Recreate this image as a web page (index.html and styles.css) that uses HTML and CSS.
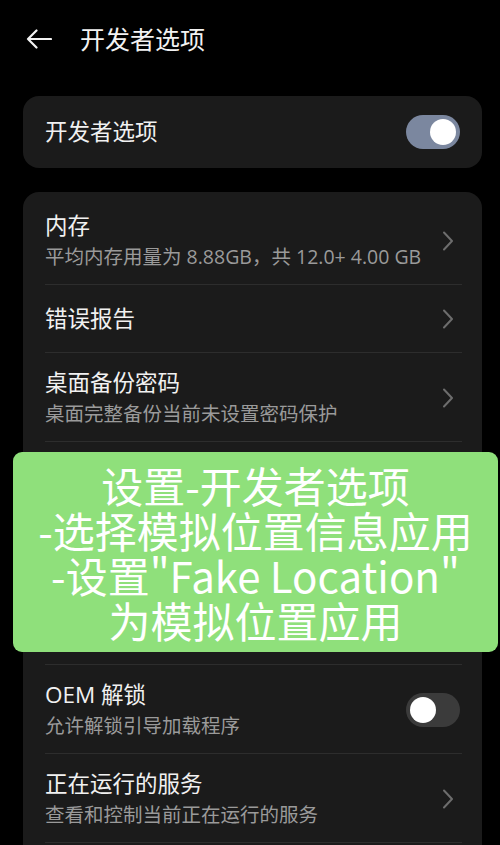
FILE: index.html
```html
<!DOCTYPE html>
<html lang="zh-CN">
<head>
<meta charset="utf-8">
<title>开发者选项</title>
<link rel="stylesheet" href="styles.css">
</head>
<body>
<div class="screen">
  <header class="topbar">
    <svg class="back" width="26" height="20" viewBox="0 0 26 20">
      <path d="M25 10H2M10.5 1.5L2 10l8.5 8.5" fill="none" stroke="#f2f2f2" stroke-width="2.2" stroke-linecap="round" stroke-linejoin="round"/>
    </svg>
    <h1 class="title">开发者选项</h1>
  </header>

  <section class="card card-single">
    <span class="item-title">开发者选项</span>
    <span class="switch switch-on"><span class="knob"></span></span>
  </section>

  <section class="card card-list">
    <div class="item">
      <div class="item-text">
        <div class="item-title">内存</div>
        <div class="item-sub">平均内存用量为 8.88GB，共 12.0+ 4.00 GB</div>
      </div>
      <svg class="chev" width="14" height="22" viewBox="0 0 14 22"><path d="M3 2.5l8 8.5-8 8.5" fill="none" stroke="#6d6d6d" stroke-width="2" stroke-linecap="round" stroke-linejoin="round"/></svg>
    </div>
    <div class="item item-one">
      <div class="item-text">
        <div class="item-title">错误报告</div>
      </div>
      <svg class="chev" width="14" height="22" viewBox="0 0 14 22"><path d="M3 2.5l8 8.5-8 8.5" fill="none" stroke="#6d6d6d" stroke-width="2" stroke-linecap="round" stroke-linejoin="round"/></svg>
    </div>
    <div class="item">
      <div class="item-text">
        <div class="item-title">桌面备份密码</div>
        <div class="item-sub">桌面完整备份当前未设置密码保护</div>
      </div>
      <svg class="chev" width="14" height="22" viewBox="0 0 14 22"><path d="M3 2.5l8 8.5-8 8.5" fill="none" stroke="#6d6d6d" stroke-width="2" stroke-linecap="round" stroke-linejoin="round"/></svg>
    </div>
    <div class="item">
      <div class="item-text">
        <div class="item-title">USB 调试</div>
        <div class="item-sub">连接 USB 后启用调试模式</div>
      </div>
      <span class="switch switch-on"><span class="knob"></span></span>
    </div>
    <div class="item item-one">
      <div class="item-text">
        <div class="item-title">选择模拟位置信息应用</div>
      </div>
      <svg class="chev" width="14" height="22" viewBox="0 0 14 22"><path d="M3 2.5l8 8.5-8 8.5" fill="none" stroke="#6d6d6d" stroke-width="2" stroke-linecap="round" stroke-linejoin="round"/></svg>
    </div>
    <div class="item item-one item-short">
      <div class="item-text">
        <div class="item-title">停用 adb 授权超时功能</div>
      </div>
      <span class="switch"><span class="knob"></span></span>
    </div>
    <div class="item">
      <div class="item-text">
        <div class="item-title">OEM 解锁</div>
        <div class="item-sub">允许解锁引导加载程序</div>
      </div>
      <span class="switch"><span class="knob"></span></span>
    </div>
    <div class="item">
      <div class="item-text">
        <div class="item-title">正在运行的服务</div>
        <div class="item-sub">查看和控制当前正在运行的服务</div>
      </div>
      <svg class="chev" width="14" height="22" viewBox="0 0 14 22"><path d="M3 2.5l8 8.5-8 8.5" fill="none" stroke="#6d6d6d" stroke-width="2" stroke-linecap="round" stroke-linejoin="round"/></svg>
    </div>
  </section>

  <div class="banner">设置-开发者选项<br>-选择模拟位置信息应用<br>-设置"Fake Location"<br>为模拟位置应用</div>
</div>
</body>
</html>
```

FILE: styles.css
```css
* { box-sizing: border-box; }

html, body {
  margin: 0;
  padding: 0;
  background: #000;
}

body {
  width: 500px;
  height: 845px;
  overflow: hidden;
  font-family: "Open Sans", "Noto Sans CJK SC", sans-serif;
  color: #f1f1f1;
}

.screen {
  position: relative;
  width: 500px;
  height: 845px;
  overflow: hidden;
}

.topbar {
  height: 78px;
  display: flex;
  align-items: center;
  padding-left: 26px;
}

.back {
  display: block;
  margin-right: 28px;
}

.title {
  margin: 0;
  font-size: 25px;
  font-weight: 400;
  line-height: 30px;
  color: #f2f2f2;
}

.card {
  margin: 18px 18px 0 23px;
  background: #1b1b1b;
  border-radius: 16px;
}

.card-single {
  height: 72px;
  display: flex;
  align-items: center;
  justify-content: space-between;
  padding: 0 22px 0 22px;
}

.card-list {
  margin-top: 24px;
  padding: 4px 0 30px 22px;
}

.item {
  display: flex;
  align-items: center;
  justify-content: space-between;
  padding: 15px 2px 14px 0;
  border-bottom: 1px solid #2d2d2d;
  margin-right: 20px;
}

.item-one {
  padding-top: 19px;
  padding-bottom: 18px;
}

.item-short {
  padding-top: 16px;
  padding-bottom: 15px;
}

.item-text {
  display: flex;
  flex-direction: column;
  gap: 3px;
  min-width: 0;
}

.item-title {
  font-size: 22.5px;
  line-height: 30px;
  color: #f1f1f1;
  white-space: nowrap;
}

.item-sub {
  font-size: 19.5px;
  line-height: 26px;
  color: #9a9a9a;
  white-space: nowrap;
}

.chev {
  display: block;
  flex: none;
  margin-right: 5px;
}

.switch {
  flex: none;
  width: 54px;
  height: 34px;
  border-radius: 17px;
  background: #3b3b3b;
  display: flex;
  align-items: center;
  padding: 0 4px;
}

.switch-on {
  background: #7b879f;
  justify-content: flex-end;
}

.knob {
  width: 26px;
  height: 26px;
  border-radius: 50%;
  background: #fff;
}

.banner {
  position: absolute;
  left: 13px;
  top: 452px;
  width: 485px;
  height: 200px;
  padding-top: 10px;
  background: #8fe07b;
  border-radius: 9px;
  color: #fff;
  font-family: "Noto Sans CJK SC", sans-serif;
  font-size: 42px;
  font-weight: 400;
  line-height: 45px;
  text-align: center;
}
```
